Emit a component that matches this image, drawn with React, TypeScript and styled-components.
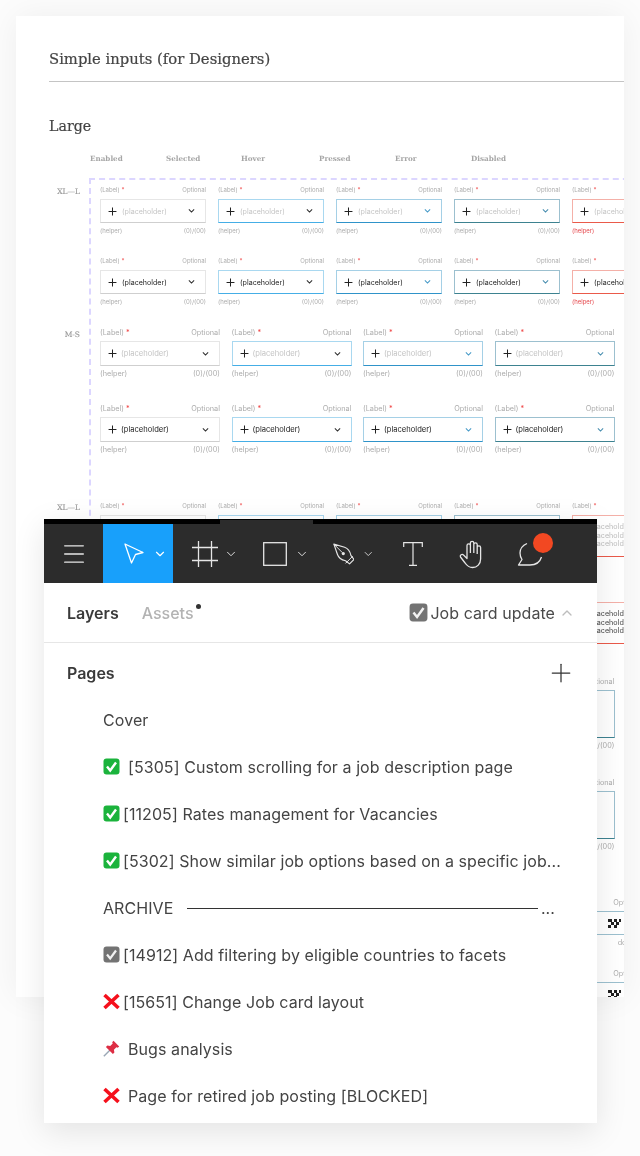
import React from "react"
import styled, { createGlobalStyle } from "styled-components"
import { ChevronDown, ChevronUp, Menu, Plus } from "lucide-react"

const Global = createGlobalStyle`
  html, body {
    margin: 0;
    padding: 0;
    background: #fcfcfc;
  }
  * {
    box-sizing: border-box;
  }
`

const Page = styled.div`
  position: relative;
  width: 640px;
  height: 1156px;
  overflow: hidden;
  padding: 16px 16px 0;
  font-family: "Inter", sans-serif;
`

const Sheet = styled.div`
  width: 608px;
  height: 981px;
  background: #fff;
  box-shadow: 0 0 32px rgba(0, 0, 0, 0.06);
  padding: 32px 0 0 33px;
  overflow: hidden;
`

const SheetBody = styled.div`
  filter: blur(0.35px);
`

const Title = styled.h1`
  margin: 0;
  font: 400 14.8px/22px "DejaVu Serif", serif;
  -webkit-text-stroke: 0.2px #444;
  color: #444;
  padding-bottom: 11px;
  border-bottom: 1px solid #c4c4c4;
`

const Subtitle = styled.h2`
  margin: 33px 0 0;
  font: 400 14.2px/22px "DejaVu Serif", serif;
  -webkit-text-stroke: 0.2px #444;
  color: #444;
`

const StateRow = styled.div`
  display: flex;
  margin: 16px 0 0 41px;
  height: 12px;
`

const StateName = styled.span<{ $w: number }>`
  width: ${({ $w }) => $w}px;
  flex: none;
  font: 700 7.2px/12px "DejaVu Serif", serif;
  color: #a6a6a6;
`

const Board = styled.div`
  display: flex;
  margin-top: 13px;
  width: 600px;
`

const Sizes = styled.div`
  width: 40px;
  flex: none;
  position: relative;
  height: 820px;
`

const SizeName = styled.span<{ $top: number }>`
  position: absolute;
  top: ${({ $top }) => $top}px;
  right: 9px;
  font: 400 7.5px/10px "DejaVu Serif", serif;
  -webkit-text-stroke: 0.15px #999;
  color: #999;
`

const Frame = styled.div`
  width: 560px;
  flex: none;
  border-left: 2px dashed #dcd6ff;
  border-top: 2px dashed #dcd6ff;
  padding: 5px 0 0 9px;
  height: 820px;
`

const Fields = styled.div<{ $gap: number; $mt: number }>`
  display: flex;
  gap: ${({ $gap }) => $gap}px;
  margin-top: ${({ $mt }) => $mt}px;
`

const Field = styled.div<{ $w: number }>`
  width: ${({ $w }) => $w}px;
  flex: none;
`

const Meta = styled.div<{ $big?: boolean; $error?: boolean }>`
  display: flex;
  justify-content: space-between;
  height: 10px;
  font-size: ${({ $big }) => ($big ? 7.3 : 6)}px;
  line-height: 10px;
  color: ${({ $error }) => ($error ? "#e5484d" : "#acacac")};
  white-space: nowrap;
`

const Star = styled.span`
  color: #ef4444;
`

const Box = styled.div<{ $color: string; $bottom?: string; $h: number; $big?: boolean }>`
  display: flex;
  align-items: center;
  height: ${({ $h }) => $h}px;
  margin: ${({ $big }) => ($big ? 3 : 4)}px 0 3px;
  padding: 0 10px 0 7px;
  border: 1px solid ${({ $color }) => $color};
  border-bottom-color: ${({ $bottom, $color }) => $bottom ?? $color};
  overflow: hidden;
`

const Ghost = styled.span<{ $filled?: boolean; $big?: boolean }>`
  flex: 1;
  font-size: ${({ $big }) => ($big ? 7.6 : 7.1)}px;
  margin-left: ${({ $big }) => ($big ? 4 : 5)}px;
  color: ${({ $filled }) => ($filled ? "#222" : "#c4c4c4")};
  white-space: nowrap;
`

const Multi = styled.div<{ $filled?: boolean }>`
  flex: 1;
  margin-left: 8px;
  font-size: 7.2px;
  line-height: 8.5px;
  color: ${({ $filled }) => ($filled ? "#444" : "#bdbdbd")};
  white-space: nowrap;
`

const Checker = styled.svg`
  display: block;
  margin: 0 10px 0 auto;
  flex: none;
`

const Panel = styled.div`
  position: absolute;
  left: 44px;
  top: 519px;
  width: 553px;
  height: 604px;
  background: #fff;
  box-shadow: 0 8px 30px rgba(0, 0, 0, 0.1);
`

const TopEdge = styled.div`
  display: flex;
  height: 5px;
  background: #000;
  padding-left: 176px;
`

const EdgeGap = styled.div`
  width: 93px;
  height: 4px;
  margin-top: 1px;
  background: #2c2c2c;
`

const Toolbar = styled.div`
  display: flex;
  align-items: center;
  height: 59px;
  background: #2c2c2c;
  color: #e6e6e6;
`

const MenuSlot = styled.div`
  width: 59px;
  height: 59px;
  flex: none;
  display: flex;
  align-items: center;
  justify-content: center;
`

const Tool = styled.div<{ $w: number; $pad: number; $gap?: number; $active?: boolean }>`
  position: relative;
  width: ${({ $w }) => $w}px;
  height: 59px;
  flex: none;
  display: flex;
  align-items: center;
  gap: ${({ $gap }) => $gap ?? 8}px;
  padding-left: ${({ $pad }) => $pad}px;
  background: ${({ $active }) => ($active ? "#18a0fb" : "transparent")};
  color: ${({ $active }) => ($active ? "#fff" : "#e6e6e6")};
`

const Badge = styled.span`
  position: absolute;
  top: 9px;
  left: 42px;
  width: 20px;
  height: 20px;
  border-radius: 50%;
  background: #f24822;
`

const Tabs = styled.div`
  display: flex;
  align-items: center;
  height: 60px;
  padding: 0 22px 0 23px;
  border-bottom: 1px solid #e6e6e6;
`

const Tab = styled.span<{ $muted?: boolean }>`
  position: relative;
  font-size: 16px;
  line-height: 20px;
  font-weight: ${({ $muted }) => ($muted ? 500 : 600)};
  color: ${({ $muted }) => ($muted ? "#b3b3b3" : "#3a3a3a")};
  margin-right: 23px;
`

const Dot = styled.span`
  position: absolute;
  right: -7px;
  top: 1px;
  width: 5px;
  height: 5px;
  border-radius: 50%;
  background: #333;
`

const Current = styled.div`
  margin-left: auto;
  display: flex;
  align-items: center;
  gap: 2px;
  font-size: 16px;
  letter-spacing: 0.05px;
  color: #4a4a4a;
`

const UpArrow = styled(ChevronUp)`
  margin-left: 2px;
  color: #bdbdbd;
`

const PagesHead = styled.div`
  display: flex;
  align-items: center;
  justify-content: space-between;
  height: 60px;
  padding: 0 21px 0 23px;
  font-size: 16px;
  font-weight: 600;
  color: #3a3a3a;
`

const PlusIcon = styled(Plus)`
  color: #333;
`

const List = styled.div`
  padding-left: 59px;
  margin-top: -7px;
`

const Item = styled.div<{ $gap?: number }>`
  display: flex;
  align-items: center;
  gap: ${({ $gap }) => $gap ?? 3}px;
  height: 47px;
  width: 452px;
  font-size: 16px;
  letter-spacing: 0.08px;
  color: #444;
  white-space: nowrap;
`

const Rule = styled.span`
  flex: 1;
  height: 1px;
  margin: 2px 0 0 11px;
  background: #333;
`

const Icon = styled.svg`
  flex: none;
  display: block;
`

const Done = () => (
  <Icon width="17" height="17" viewBox="0 0 17 17">
    <rect x="0.5" y="0.5" width="16" height="16" rx="3" fill="#1bb33c" />
    <path d="M4 8.500l3.200 4L13 4.500" fill="none" stroke="#fff" strokeWidth="2.400" />
  </Icon>
)

const Archived = ({ size = 17 }: { size?: number }) => (
  <Icon width={size} height={size} viewBox="0 0 17 17">
    <rect x="0.5" y="0.5" width="16" height="16" rx="3" fill="#737373" />
    <path d="M4 8.500l3.200 4L13 4.500" fill="none" stroke="#f2f2f2" strokeWidth="2.200" />
  </Icon>
)

const Cross = () => (
  <Icon width="17" height="17" viewBox="0 0 17 17">
    <path d="M1.500 2l14 13M15.500 2l-14 13" fill="none" stroke="#f5101c" strokeWidth="3.600" />
  </Icon>
)

const Pin = () => (
  <Icon width="17" height="17" viewBox="0 0 17 17">
    <path d="M.8 16.200l6.500-6.500" stroke="#9aa7b5" strokeWidth="1.400" />
    <path d="M10.500.8l5.700 5.700-1.500 1.200-1.300-.5-2.500 2.500.5 2.800-1.500 1.500-7-7 1.500-1.500 2.800.5 2.500-2.500-.5-1.300z" fill="#dd2e44" />
  </Icon>
)

const Chev = ({ color }: { color?: string }) => (
  <svg width="7" height="6" viewBox="0 0 8 6" style={{ flex: "none" }}>
    <path d="M1 1.200l3 3 3-3" fill="none" stroke={color ?? "#333"} strokeWidth="1.300" />
  </svg>
)

const Cross8 = () => (
  <svg width="9" height="9" viewBox="0 0 8 8" style={{ flex: "none" }}>
    <path d="M4 .5v7M.5 4h7" stroke="#222" strokeWidth="0.900" />
  </svg>
)

type Look = { color: string; bottom?: string; chev?: string; error?: boolean }

const looks: Look[] = [
  { color: "#e6e6e6", bottom: "#cfcfcf" },
  { color: "#a9d8f0", bottom: "#45aee6", chev: "#333" },
  { color: "#a5d0e6", bottom: "#2f93c9", chev: "#4a9cc9" },
  { color: "#9cc0cf", bottom: "#3d8290", chev: "#4a8fb0" },
  { color: "#f4b0a8", bottom: "#ea5a4a", chev: "#333", error: true },
]

const FieldRow = ({ big, filled, mt, h }: { big?: boolean; filled?: boolean; mt: number; h: number }) => {
  const shown = big ? looks.slice(0, 4) : looks
  return (
    <Fields $gap={big ? 11.5 : 12} $mt={mt}>
      {shown.map((look, i) => (
        <Field key={i} $w={big ? 120 : 106}>
          <Meta $big={big}>
            <span>
              (Label) <Star>*</Star>
            </span>
            <span>Optional</span>
          </Meta>
          <Box $color={look.color} $bottom={look.bottom} $h={h} $big={big}>
            <Cross8 />
            <Ghost $filled={filled} $big={big}>
              (placeholder)
            </Ghost>
            <Chev color={look.chev} />
          </Box>
          <Meta $big={big} $error={look.error}>
            <span>(helper)</span>
            {!look.error && <span>(0)/(00)</span>}
          </Meta>
        </Field>
      ))}
    </Fields>
  )
}

const MultiRow = ({ mt, filled }: { mt: number; filled?: boolean }) => (
  <Fields $gap={12} $mt={mt}>
    {looks.map((look, i) => (
      <Field key={i} $w={106}>
        <Meta>
          <span>
            (Label) <Star>*</Star>
          </span>
          <span>Optional</span>
        </Meta>
        <Box $color={look.color} $bottom={look.bottom} $h={42}>
          <Multi $filled={filled}>
            (placeholder placeholder
            <br />
            (placeholder placeholder
            <br />
            (placeholder placeholder
          </Multi>
        </Box>
      </Field>
    ))}
  </Fields>
)

const TallRow = ({ mt }: { mt: number }) => (
  <Fields $gap={11.5} $mt={mt}>
    {looks.slice(0, 4).map((look, i) => (
      <Field key={i} $w={120}>
        <Meta $big>
          <span>(Label)</span>
          <span>Optional</span>
        </Meta>
        <Box $color={look.color} $bottom={look.bottom} $h={48} $big />
        <Meta $big>
          <span>(helper)</span>
          <span>(0)/(00)</span>
        </Meta>
      </Field>
    ))}
  </Fields>
)

const DateRow = ({ mt }: { mt: number }) => (
  <Fields $gap={10} $mt={mt}>
    {looks.slice(0, 4).map((look, i) => (
      <Field key={i} $w={128}>
        <Meta $big>
          <span />
          <span>Optional</span>
        </Meta>
        <Box $color={look.color} $bottom={look.color} $h={24} $big>
          <Checker width="14" height="9" viewBox="0 0 14 9">
            <path d="M1 0h4v3H1zM7 0h3v3H7zM12 0h2v3h-2zM4 3h3v3H4zM9 3h3v3H9zM1 6h3v3H1zM7 6h3v3H7z" fill="#222" />
          </Checker>
        </Box>
        <Meta $big>
          <span />
          <span>dd/mm</span>
        </Meta>
      </Field>
    ))}
  </Fields>
)

export default function App() {
  return (
    <Page>
      <Global />
      <Sheet>
        <SheetBody>
          <Title>Simple inputs (for Designers)</Title>
          <Subtitle>Large</Subtitle>
          <StateRow>
            <StateName $w={76}>Enabled</StateName>
            <StateName $w={75}>Selected</StateName>
            <StateName $w={78}>Hover</StateName>
            <StateName $w={76}>Pressed</StateName>
            <StateName $w={76}>Error</StateName>
            <StateName $w={60}>Disabled</StateName>
          </StateRow>
          <Board>
            <Sizes>
              <SizeName $top={9}>XL—L</SizeName>
              <SizeName $top={152}>M-S</SizeName>
              <SizeName $top={325}>XL—L</SizeName>
            </Sizes>
            <Frame>
              <FieldRow mt={0} h={24} />
              <FieldRow mt={20} h={24} filled />
              <FieldRow big mt={21} h={25} />
              <FieldRow big mt={25} h={25} filled />
              <MultiRow mt={46} />
              <MultiRow mt={28} filled />
              <TallRow mt={30} />
              <TallRow mt={27} />
              <DateRow mt={46} />
              <DateRow mt={21} />
            </Frame>
          </Board>
        </SheetBody>
      </Sheet>

      <Panel>
        <TopEdge>
          <EdgeGap />
        </TopEdge>
        <Toolbar>
          <MenuSlot>
            <Menu size={28} strokeWidth={1.1} />
          </MenuSlot>
          <Tool $w={70} $pad={21} $gap={9} $active>
            <svg width="20" height="21" viewBox="0 0 20 21">
              <path d="M1 1l18 8.500-7.500 2L7.500 20z" fill="none" stroke="#fff" strokeWidth="1.300" strokeLinejoin="round" />
            </svg>
            <ChevronDown size={14} strokeWidth={2} />
          </Tool>
          <Tool $w={66} $pad={19} $gap={6}>
            <svg width="26" height="26" viewBox="0 0 26 26">
              <path d="M6.500 0v26M19.500 0v26M0 6.500h26M0 19.500h26" fill="none" stroke="#e6e6e6" strokeWidth="1.300" />
            </svg>
            <ChevronDown size={14} strokeWidth={1.6} />
          </Tool>
          <Tool $w={72} $pad={24}>
            <svg width="24" height="24" viewBox="0 0 24 24">
              <rect x="0.7" y="0.7" width="22.6" height="22.6" fill="none" stroke="#e6e6e6" strokeWidth="1.300" />
            </svg>
            <ChevronDown size={14} strokeWidth={1.6} />
          </Tool>
          <Tool $w={64} $pad={22}>
            <svg width="24" height="24" viewBox="0 0 24 24">
              <path
                d="M1 1l12 3.500c3 1 6 4.500 7 9l3.500 4.500-5 5-4.500-3.500c-4.500-1-8-4-9-7z"
                fill="none"
                stroke="#e6e6e6"
                strokeWidth="1.300"
                strokeLinejoin="round"
              />
              <circle cx="11.500" cy="11.500" r="1.800" fill="#e6e6e6" />
              <path d="M1 1l9.500 9.500M14 22.500l8-8" fill="none" stroke="#e6e6e6" strokeWidth="1.100" />
            </svg>
            <ChevronDown size={14} strokeWidth={1.6} />
          </Tool>
          <Tool $w={58} $pad={28}>
            <svg width="20" height="24" viewBox="0 0 20 24">
              <path d="M.7 5V.7h18.600V5M10 .7v22.600M6 23.300h8" fill="none" stroke="#e6e6e6" strokeWidth="1.200" />
            </svg>
          </Tool>
          <Tool $w={58} $pad={25}>
            <svg width="28" height="30" viewBox="0 0 28 30">
              <path
                d="M9 15V6.500a1.700 1.700 0 0 1 3.400 0V14M12.400 14V4a1.700 1.700 0 0 1 3.400 0v10M15.800 14V5.500a1.700 1.700 0 0 1 3.400 0V15M19.200 15V8.500a1.700 1.700 0 0 1 3.400 0V20c0 5-3.500 8.500-8 8.500-3.500 0-5.500-1.500-7.500-4.500L2.500 18c-1-1.800 1.500-3.500 3-2l3.500 3.500V15"
                fill="none"
                stroke="#e6e6e6"
                strokeWidth="1.300"
                strokeLinejoin="round"
              />
            </svg>
          </Tool>
          <Tool $w={58} $pad={26}>
            <svg width="26" height="24" viewBox="0 0 26 24">
              <path
                d="M10 1.500C5.500 3.500 3 7 3 11c0 3 1 5 2 6.500L1.500 23H13c5.500 0 10-3 11.500-8"
                fill="none"
                stroke="#e6e6e6"
                strokeWidth="1.300"
                strokeLinejoin="round"
              />
            </svg>
            <Badge />
          </Tool>
        </Toolbar>
        <Tabs>
          <Tab>Layers</Tab>
          <Tab $muted>
            Assets
            <Dot />
          </Tab>
          <Current>
            <Archived size={19} />
            Job card update
            <UpArrow size={16} />
          </Current>
        </Tabs>
        <PagesHead>
          Pages
          <PlusIcon size={30} strokeWidth={1} />
        </PagesHead>
        <List>
          <Item>Cover</Item>
          <Item $gap={8}>
            <Done />
            [5305] Custom scrolling for a job description page
          </Item>
          <Item>
            <Done />
            [11205] Rates management for Vacancies
          </Item>
          <Item>
            <Done />
            [5302] Show similar job options based on a specific job...
          </Item>
          <Item>
            ARCHIVE
            <Rule />
            ...
          </Item>
          <Item>
            <Archived />
            [14912] Add filtering by eligible countries to facets
          </Item>
          <Item>
            <Cross />
            [15651] Change Job card layout
          </Item>
          <Item $gap={8}>
            <Pin />
            Bugs analysis
          </Item>
          <Item $gap={8}>
            <Cross />
            Page for retired job posting [BLOCKED]
          </Item>
        </List>
      </Panel>
    </Page>
  )
}
